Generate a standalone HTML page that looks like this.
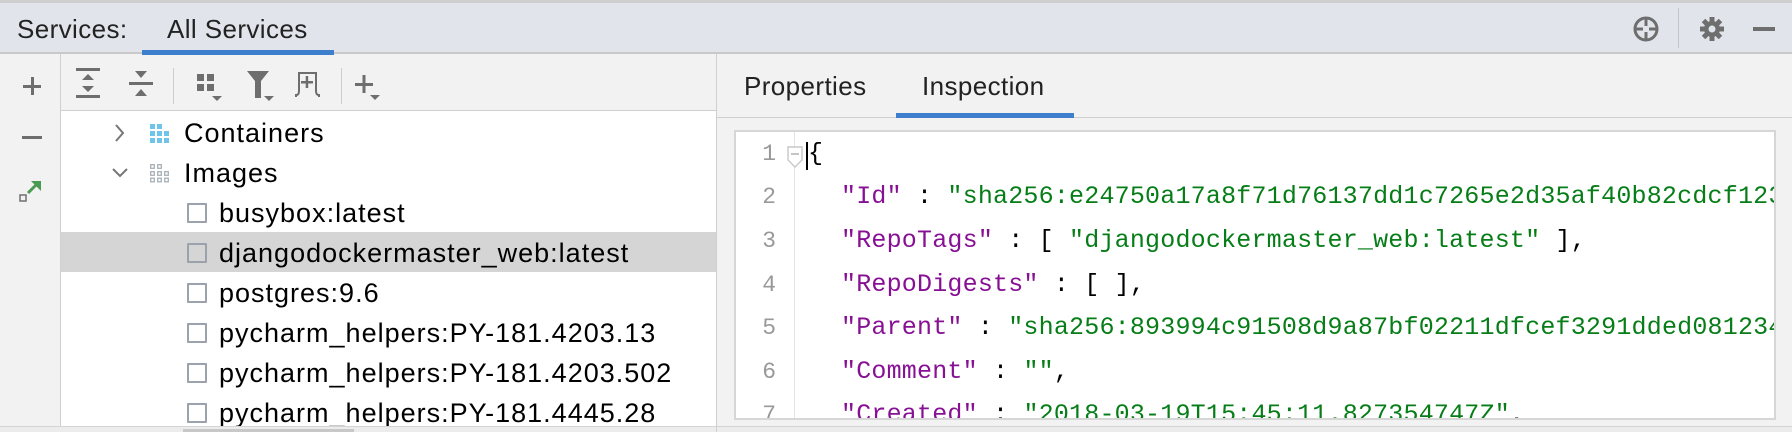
<!DOCTYPE html>
<html><head><meta charset="utf-8"><style>
*{margin:0;padding:0;box-sizing:border-box}
body{width:1792px;height:432px;overflow:hidden;background:#f2f2f2;font-family:"Liberation Sans",sans-serif;position:relative;color:#000}
.a{position:absolute}
.t{font-size:27px;letter-spacing:1px;white-space:nowrap;line-height:30px}
.h{font-size:26px;letter-spacing:0.4px}
.code{font-family:"Liberation Mono",monospace;font-size:25px;letter-spacing:0.2px;white-space:pre;line-height:30px}
.k{color:#871094}.s{color:#067d17}
.ln{color:#999;font-family:"Liberation Mono",monospace;font-size:23px;width:34px;text-align:right;line-height:30px}
.cb{width:20px;height:20px;border:2.5px solid #9aa3ab;border-radius:1px}
</style></head><body>
<div class="a" style="left:0;top:0;width:1792px;height:3px;background:#cfcfcf"></div>
<div class="a" style="left:0;top:3px;width:1792px;height:49px;background:#e1e5eb"></div>
<div class="a" style="left:0;top:52px;width:1792px;height:2px;background:#c9c9c9"></div>
<div class="a t h" style="left:17px;top:14px;color:#222">Services:</div>
<div class="a t h" style="left:167px;top:14px;color:#222">All Services</div>
<div class="a" style="left:142px;top:50px;width:192px;height:5px;background:#3d7fcc"></div>
<svg class="a" style="left:1632px;top:15px" width="28" height="28" viewBox="0 0 28 28"><circle cx="14" cy="14" r="11" fill="none" stroke="#6e6e6e" stroke-width="3"/><path d="M14 3v8M14 17v8M3 14h8M17 14h8" stroke="#6e6e6e" stroke-width="3"/></svg>
<div class="a" style="left:1678px;top:8px;width:1px;height:40px;background:#c4c4c4"></div>
<svg class="a" style="left:1699px;top:16px" width="26" height="26" viewBox="0 0 26 26"><g fill="#6e6e6e"><circle cx="13" cy="13" r="8"/><rect x="10.5" y="1" width="5" height="24"/><rect x="1" y="10.5" width="24" height="5"/><rect x="10.5" y="1" width="5" height="24" transform="rotate(45 13 13)"/><rect x="10.5" y="1" width="5" height="24" transform="rotate(-45 13 13)"/></g><circle cx="13" cy="13" r="3.5" fill="#e1e5eb"/></svg>
<div class="a" style="left:1753px;top:27px;width:22px;height:4px;background:#6e6e6e"></div>
<div class="a" style="left:60px;top:54px;width:1px;height:378px;background:#d0d0d0"></div>
<div class="a" style="left:23px;top:85px;width:18px;height:3px;background:#6e6e6e"></div>
<div class="a" style="left:30.5px;top:77px;width:3px;height:18px;background:#6e6e6e"></div>
<div class="a" style="left:22px;top:136px;width:20px;height:3px;background:#6e6e6e"></div>
<svg class="a" style="left:18px;top:178px" width="26" height="26" viewBox="0 0 26 26"><rect x="2" y="17" width="6" height="6" fill="none" stroke="#777" stroke-width="1.6"/><path d="M10 15L20 5" stroke="#4a9a52" stroke-width="3"/><path d="M13 3h10v10z" fill="#4a9a52"/></svg>
<div class="a" style="left:61px;top:110px;width:656px;height:1px;background:#d0d0d0"></div>
<svg class="a" style="left:74px;top:66px" width="340" height="40" viewBox="0 0 340 40">
<g fill="#6e6e6e">
<rect x="2" y="2" width="24" height="3"/><rect x="2" y="29" width="24" height="3"/><path d="M8 14l6-6 6 6zM8 20l6 6 6-6z"/>
<rect x="55" y="16" width="24" height="3"/><path d="M61 5l6 7 6-7zM61 30l6-7 6 7z"/>
<rect x="99" y="2" width="1" height="36" fill="#ccc"/>
<rect x="123" y="8" width="7" height="7"/><rect x="133" y="8" width="7" height="7"/><rect x="123" y="18" width="7" height="7"/><rect x="133" y="18" width="7" height="7"/><path d="M138 30h10l-5 5z"/>
<path d="M173 5h22l-8 10v17h-6v-17z"/><path d="M190 30h10l-5 5z"/>
<path d="M222 31v-2q3 0 3-4v-18h17v18q0 4 3 4v2" fill="none" stroke="#6e6e6e" stroke-width="2"/><rect x="227" y="15" width="12" height="2.5"/><rect x="231.7" y="10" width="2.5" height="12"/>
<rect x="267" y="2" width="1" height="36" fill="#ccc"/>
<rect x="281" y="17" width="18" height="3"/><rect x="288.5" y="9" width="3" height="18"/><path d="M296 29h10l-5 5z"/>
</g></svg>
<div class="a" style="left:61px;top:111px;width:656px;height:315px;background:#fff"></div>
<div class="a" style="left:61px;top:232px;width:656px;height:40px;background:#d5d5d5"></div>
<svg class="a" style="left:112px;top:123px" width="16" height="60" viewBox="0 0 16 60"><path d="M4 2l7 8-7 8" fill="none" stroke="#777" stroke-width="2"/><path d="M1 46l7 7 7-7" fill="none" stroke="#777" stroke-width="2"/></svg>
<svg class="a" style="left:150px;top:124px" width="20" height="60" viewBox="0 0 20 60"><g fill="#6ec5e9"><rect x="0" y="0" width="5" height="5"/><rect x="7" y="0" width="5" height="5"/><rect x="0" y="7" width="5" height="5"/><rect x="7" y="7" width="5" height="5"/><rect x="14" y="7" width="5" height="5"/><rect x="0" y="14" width="5" height="5"/><rect x="7" y="14" width="5" height="5"/><rect x="14" y="14" width="5" height="5"/></g>
<g fill="none" stroke="#a8b0b8" stroke-width="1.3"><rect x="0.7" y="40.7" width="3.6" height="3.6"/><rect x="7.7" y="40.7" width="3.6" height="3.6"/><rect x="0.7" y="47.7" width="3.6" height="3.6"/><rect x="7.7" y="47.7" width="3.6" height="3.6"/><rect x="14.7" y="47.7" width="3.6" height="3.6"/><rect x="0.7" y="54.2" width="3.6" height="3.6"/><rect x="7.7" y="54.2" width="3.6" height="3.6"/><rect x="14.7" y="54.2" width="3.6" height="3.6"/></g></svg>
<div class="a t" style="left:184px;top:118px">Containers</div>
<div class="a t" style="left:184px;top:158px">Images</div>
<div class="a cb" style="left:187px;top:203px"></div><div class="a t" style="left:219px;top:198px">busybox:latest</div>
<div class="a cb" style="left:187px;top:243px"></div><div class="a t" style="left:219px;top:238px">djangodockermaster_web:latest</div>
<div class="a cb" style="left:187px;top:283px"></div><div class="a t" style="left:219px;top:278px">postgres:9.6</div>
<div class="a cb" style="left:187px;top:323px"></div><div class="a t" style="left:219px;top:318px">pycharm_helpers:PY-181.4203.13</div>
<div class="a cb" style="left:187px;top:363px"></div><div class="a t" style="left:219px;top:358px">pycharm_helpers:PY-181.4203.502</div>
<div class="a cb" style="left:187px;top:403px"></div><div class="a t" style="left:219px;top:398px">pycharm_helpers:PY-181.4445.28</div>
<div class="a" style="left:0;top:426px;width:1792px;height:6px;background:#ececec"></div>
<div class="a" style="left:0;top:426px;width:1792px;height:1px;background:#d4d4d4"></div>
<div class="a" style="left:183px;top:429px;width:171px;height:3px;background:#c8c8c8"></div>
<div class="a" style="left:716px;top:54px;width:1px;height:378px;background:#d0d0d0"></div>
<div class="a t h" style="left:744px;top:71px;color:#222">Properties</div>
<div class="a t h" style="left:922px;top:71px;color:#222">Inspection</div>
<div class="a" style="left:717px;top:117px;width:1075px;height:1px;background:#d0d0d0"></div>
<div class="a" style="left:896px;top:113px;width:178px;height:5px;background:#3d7fcc"></div>
<div class="a" style="left:734px;top:130px;width:1042px;height:290px;background:#fff;border:2px solid #d6d6d6;overflow:hidden">
 <div class="a" style="left:58px;top:0;width:1px;height:290px;background:#e4e4e4"></div>
 <svg class="a" style="left:50px;top:14px" width="18" height="22" viewBox="0 0 18 22"><path d="M2 1h14v13l-7 7-7-7z" fill="#fff" stroke="#c8c8c8" stroke-width="1.4"/><path d="M5 8h8" stroke="#aaa" stroke-width="1.4"/></svg>
 <div class="a" style="left:70px;top:10px;width:2px;height:28px;background:#000"></div>
 <div class="a ln" style="left:6px;top:7px">1</div><div class="a code" style="left:72px;top:7px">{</div>
 <div class="a ln" style="left:6px;top:50px">2</div><div class="a code" style="left:105px;top:50px"><span class="k">"Id"</span> : <span class="s">"sha256:e24750a17a8f71d76137dd1c7265e2d35af40b82cdcf1234abcd"</span></div>
 <div class="a ln" style="left:6px;top:94px">3</div><div class="a code" style="left:105px;top:94px"><span class="k">"RepoTags"</span> : [ <span class="s">"djangodockermaster_web:latest"</span> ],</div>
 <div class="a ln" style="left:6px;top:138px">4</div><div class="a code" style="left:105px;top:138px"><span class="k">"RepoDigests"</span> : [ ],</div>
 <div class="a ln" style="left:6px;top:181px">5</div><div class="a code" style="left:105px;top:181px"><span class="k">"Parent"</span> : <span class="s">"sha256:893994c91508d9a87bf02211dfcef3291dded0812345abcd"</span></div>
 <div class="a ln" style="left:6px;top:225px">6</div><div class="a code" style="left:105px;top:225px"><span class="k">"Comment"</span> : <span class="s">""</span>,</div>
 <div class="a ln" style="left:6px;top:268px">7</div><div class="a code" style="left:105px;top:268px"><span class="k">"Created"</span> : <span class="s">"2018-03-19T15:45:11.827354747Z"</span>,</div>
</div>
</body></html>
